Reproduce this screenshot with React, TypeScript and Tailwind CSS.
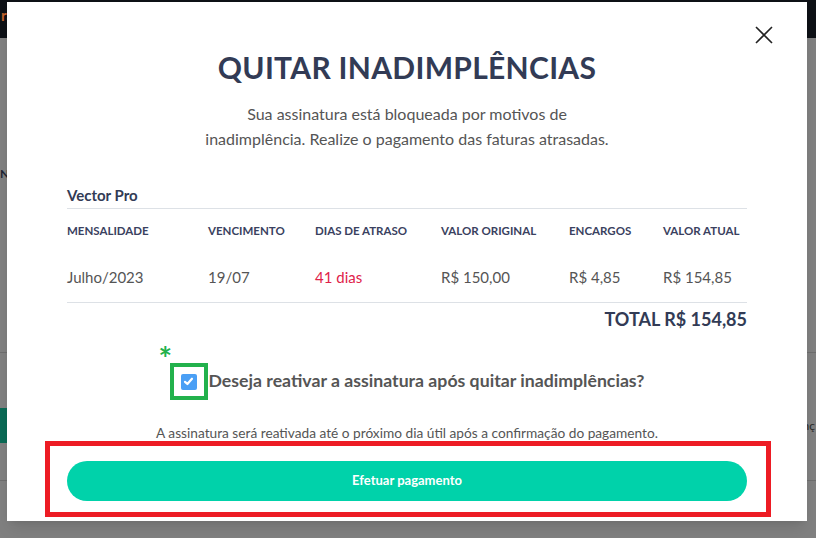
import React from 'react';

const columns = [
  { label: 'Mensalidade', value: 'Julho/2023', w: 'w-[141px]' },
  { label: 'Vencimento', value: '19/07', w: 'w-[107px]' },
  { label: 'Dias de atraso', value: '41 dias', w: 'w-[126px]', late: true },
  { label: 'Valor original', value: 'R$ 150,00', w: 'w-[128px]' },
  { label: 'Encargos', value: 'R$ 4,85', w: 'w-[94px]' },
  { label: 'Valor atual', value: 'R$ 154,85', w: 'w-[84px]' },
];

const BackgroundPage = () => (
  <div className="h-[538px] w-[816px] bg-[#808080] overflow-hidden">
    {/* dimmed top bar */}
    <div className="h-[38px] bg-[#0e1116] flex items-start px-[1px] pt-[8px]">
      <span className="text-[15px] font-bold text-[#c0612b] leading-none">ra</span>
    </div>
    <div className="pt-[130px] text-[12px] font-bold text-[#1e2433] leading-none">N</div>
    <div className="mt-[172px] border-t border-[#6e6e6e]" />
    <div className="mt-[55px] flex justify-between items-center">
      <div className="w-[40px] h-[35px] bg-[#0a6a55]" />
      <span className="text-[12px] text-[#2a2a2a] pr-[1px]">nç</span>
    </div>
    <div className="mt-[37px] border-t border-[#6e6e6e]" />
  </div>
);

export default function App() {
  return (
    <div className="relative w-[816px] h-[538px] overflow-hidden font-['Lato',sans-serif]">
      <BackgroundPage />

      {/* modal */}
      <div className="absolute left-[7px] top-[2px] w-[800px] h-[519px] bg-white shadow-lg flex flex-col pt-[46px] px-[60px]">
        <button className="absolute right-[33px] top-[23px] w-[20px] h-[20px] flex items-center justify-center">
          <svg width="18" height="18" viewBox="0 0 18 18" fill="none" stroke="#222" strokeWidth="1.6">
            <path d="M1 1 L17 17 M17 1 L1 17" />
          </svg>
        </button>

        <h1 className="text-center text-[30px] leading-[38px] font-bold text-[#323b55] tracking-[0.3px]">
          QUITAR INADIMPLÊNCIAS
        </h1>
        <p className="mt-[15px] text-center text-[16px] leading-[25px] text-[#555]">
          Sua assinatura está bloqueada por motivos de
          <br />
          inadimplência. Realize o pagamento das faturas atrasadas.
        </p>

        <div className="mt-[34px] pb-[2px] border-b border-[#dde1e6] text-[15px] leading-[21px] font-bold text-[#323b55]">
          Vector Pro
        </div>

        <div className="flex h-[44px] items-center">
          {columns.map((c) => (
            <div key={c.label} className={`${c.w} text-[11.5px] font-bold uppercase text-[#3a4160] whitespace-nowrap`}>
              {c.label}
            </div>
          ))}
        </div>
        <div className="flex h-[50px] items-center border-b border-[#dde1e6]">
          {columns.map((c) => (
            <div
              key={c.label}
              className={`${c.w} text-[15px] whitespace-nowrap ${c.late ? 'text-[#e0224a]' : 'text-[#555]'}`}
            >
              {c.value}
            </div>
          ))}
        </div>

        <div className="mt-[5px] text-right text-[18px] leading-[22px] font-bold text-[#323b55]">
          TOTAL R$ 154,85
        </div>

        <div className="mt-[33px] flex justify-center items-center">
          <div className="relative w-[38px] h-[37px] border-4 border-[#22b14c] flex items-center justify-center">
            <span className="absolute -left-[15px] -top-[24px] text-[32px] leading-none font-bold text-[#22b14c]">*</span>
            <div className="w-[16px] h-[16px] bg-[#4a9ff5] rounded-[2px] flex items-center justify-center">
              <svg width="11" height="11" viewBox="0 0 12 12" fill="none" stroke="white" strokeWidth="2.4" strokeLinecap="round" strokeLinejoin="round">
                <path d="M2.2 6.4 L4.8 8.8 L9.8 3" />
              </svg>
            </div>
          </div>
          <span className="text-[17.7px] font-bold text-[#555] pl-[1px]">
            Deseja reativar a assinatura após quitar inadimplências?
          </span>
        </div>

        <p className="mt-[24px] text-center text-[13.7px] leading-[18px] text-[#555]">
          A assinatura será reativada até o próximo dia útil após a confirmação do pagamento.
        </p>

        <div className="relative mt-[19px]">
          <div className="absolute -left-[22px] -right-[24px] -top-[20px] -bottom-[16px] border-[5px] border-[#ed1c24]" />
          <button className="relative w-full h-[40px] rounded-full bg-[#00d2aa] text-white text-[13px] font-bold">
            Efetuar pagamento
          </button>
        </div>
      </div>
    </div>
  );
}
